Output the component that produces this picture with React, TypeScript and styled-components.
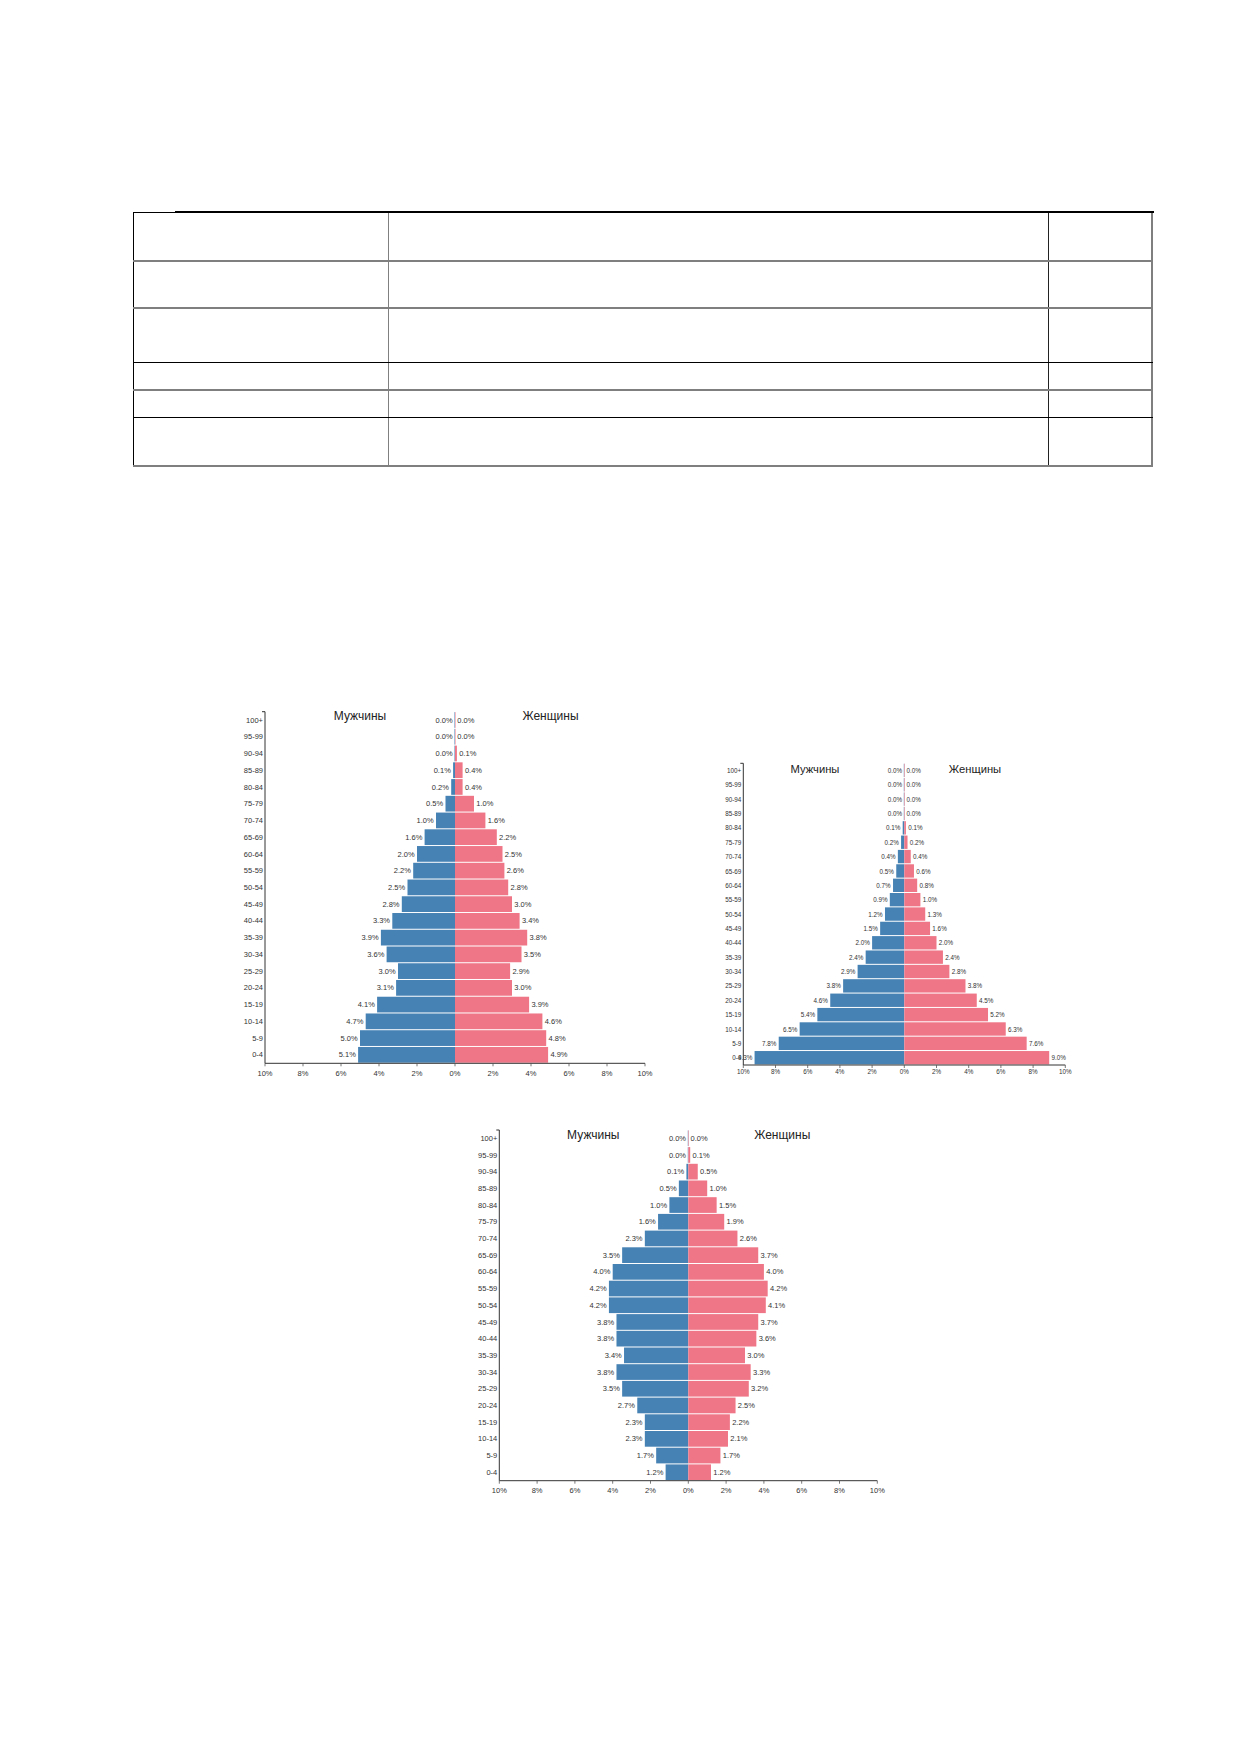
import React from "react";
import styled, { createGlobalStyle } from "styled-components";

const Global = createGlobalStyle`
  html, body { margin: 0; padding: 0; background: #ffffff; }
  body { width: 1240px; min-height: 1754px; font-family: "Liberation Sans", Arial, sans-serif; }
`;

const Page = styled.div`
  width: 1240px;
  min-height: 1754px;
  padding-top: 212px;
  box-sizing: border-box;
`;

const TableWrap = styled.div`
  position: relative;
  margin-left: 133px;
  width: 1020px;
  border-top: 1px solid #000;
  box-sizing: border-box;
`;

const TopRule = styled.div`
  position: absolute;
  top: -2px;
  left: 42px;
  right: -1px;
  height: 2px;
  background: #000;
`;

type Line = "gray" | "black";

const Row = styled.div<{ $h: number; $line: Line }>`
  display: grid;
  grid-template-columns: 256px 660px 104px;
  height: ${(p) => p.$h}px;
  box-sizing: border-box;
  border-bottom: ${(p) => (p.$line === "gray" ? "2px solid #7f7f7f" : "1px solid #000")};
`;

const Cell = styled.div<{ $pos: "first" | "mid" | "last" }>`
  box-sizing: border-box;
  border-left: ${(p) => (p.$pos === "first" ? "1px solid #000" : "none")};
  border-right: ${(p) =>
    p.$pos === "first" ? "1px solid #808080" : p.$pos === "mid" ? "1px solid #222" : "2px solid #7f7f7f"};
`;

const ChartRow = styled.div<{ $mt: number }>`
  display: flex;
  align-items: flex-start;
  margin-top: ${(p) => p.$mt}px;
`;

const ChartSlot = styled.div<{ $ml: number; $mt?: number }>`
  margin-left: ${(p) => p.$ml}px;
  margin-top: ${(p) => p.$mt ?? 0}px;
  svg { display: block; overflow: visible; }
`;

const SmallText = styled.text<{ $fs: number }>`
  font-family: "Liberation Sans", Arial, sans-serif;
  font-size: ${(p) => p.$fs}px;
  fill: #333;
  dominant-baseline: central;
`;

const TitleText = styled.text<{ $fs: number }>`
  font-family: "Liberation Sans", Arial, sans-serif;
  font-size: ${(p) => p.$fs}px;
  fill: #222;
  dominant-baseline: central;
  text-anchor: middle;
`;

const MALE = "#4682b4";
const FEMALE = "#ef7687";

const AGES = [
  "100+", "95-99", "90-94", "85-89", "80-84", "75-79", "70-74", "65-69", "60-64", "55-59",
  "50-54", "45-49", "40-44", "35-39", "30-34", "25-29", "20-24", "15-19", "10-14", "5-9", "0-4",
];

type Cfg = {
  w: number; h: number; axisX: number; top: number; bottom: number; pxPer: number;
  fs: number; titleFs: number; titleY: number; maleX: number; femaleX: number; tickY: number;
};

function Pyramid({ cfg, male, female }: { cfg: Cfg; male: number[]; female: number[] }) {
  const n = AGES.length;
  const rowH = (cfg.bottom - cfg.top) / n;
  const center = cfg.axisX + 10 * cfg.pxPer;
  const right = cfg.axisX + 20 * cfg.pxPer;
  const ticks = [10, 8, 6, 4, 2, 0, 2, 4, 6, 8, 10];
  return (
    <svg width={cfg.w} height={cfg.h} viewBox={`0 0 ${cfg.w} ${cfg.h}`}>
      {AGES.map((age, i) => {
        const y0 = cfg.top + i * rowH;
        const cy = y0 + rowH / 2;
        const m = male[i];
        const f = female[i];
        const mw = m * cfg.pxPer;
        const fw = f * cfg.pxPer;
        return (
          <g key={age}>
            <rect x={center - Math.max(mw, 0.5)} y={y0 + 0.4} width={Math.max(mw, 0.5)} height={rowH - 1} fill={MALE} />
            <rect x={center} y={y0 + 0.4} width={Math.max(fw, 0.5)} height={rowH - 1} fill={FEMALE} />
            <SmallText $fs={cfg.fs} x={cfg.axisX - 2} y={cy} textAnchor="end">{age}</SmallText>
            <SmallText $fs={cfg.fs} x={center - mw - 2.3} y={cy} textAnchor="end">{m.toFixed(1)}%</SmallText>
            <SmallText $fs={cfg.fs} x={center + fw + 2.3} y={cy} textAnchor="start">{f.toFixed(1)}%</SmallText>
          </g>
        );
      })}
      <line x1={cfg.axisX - 3} y1={cfg.top} x2={cfg.axisX} y2={cfg.top} stroke="#333" strokeWidth={1} />
      <line x1={cfg.axisX} y1={cfg.top} x2={cfg.axisX} y2={cfg.bottom} stroke="#333" strokeWidth={1} />
      <line x1={cfg.axisX} y1={cfg.bottom} x2={right} y2={cfg.bottom} stroke="#333" strokeWidth={1} />
      {ticks.map((t, k) => {
        const x = cfg.axisX + k * 2 * cfg.pxPer;
        return (
          <g key={k}>
            <line x1={x} y1={cfg.bottom} x2={x} y2={cfg.bottom + 3} stroke="#555" strokeWidth={0.8} />
            <SmallText $fs={cfg.fs} x={x} y={cfg.tickY} textAnchor="middle">{t}%</SmallText>
          </g>
        );
      })}
      <TitleText $fs={cfg.titleFs} x={cfg.maleX} y={cfg.titleY}>Мужчины</TitleText>
      <TitleText $fs={cfg.titleFs} x={cfg.femaleX} y={cfg.titleY}>Женщины</TitleText>
    </svg>
  );
}

const chart1: Cfg = { w: 420, h: 382, axisX: 30, top: 11.7, bottom: 363.3, pxPer: 19, fs: 7.5, titleFs: 12, titleY: 16, maleX: 125, femaleX: 315.5, tickY: 373 };
const chart2: Cfg = { w: 360, h: 330, axisX: 28.3, top: 8.3, bottom: 310, pxPer: 16.1, fs: 6.3, titleFs: 11.2, titleY: 14, maleX: 100, femaleX: 260, tickY: 316.7 };
const chart3: Cfg = { w: 418, h: 385, axisX: 29.3, top: 10, bottom: 360.7, pxPer: 18.9, fs: 7.5, titleFs: 12, titleY: 15, maleX: 123.3, femaleX: 312.3, tickY: 370 };

const m1 = [0.0, 0.0, 0.0, 0.1, 0.2, 0.5, 1.0, 1.6, 2.0, 2.2, 2.5, 2.8, 3.3, 3.9, 3.6, 3.0, 3.1, 4.1, 4.7, 5.0, 5.1];
const f1 = [0.0, 0.0, 0.1, 0.4, 0.4, 1.0, 1.6, 2.2, 2.5, 2.6, 2.8, 3.0, 3.4, 3.8, 3.5, 2.9, 3.0, 3.9, 4.6, 4.8, 4.9];
const m2 = [0.0, 0.0, 0.0, 0.0, 0.1, 0.2, 0.4, 0.5, 0.7, 0.9, 1.2, 1.5, 2.0, 2.4, 2.9, 3.8, 4.6, 5.4, 6.5, 7.8, 9.3];
const f2 = [0.0, 0.0, 0.0, 0.0, 0.1, 0.2, 0.4, 0.6, 0.8, 1.0, 1.3, 1.6, 2.0, 2.4, 2.8, 3.8, 4.5, 5.2, 6.3, 7.6, 9.0];
const m3 = [0.0, 0.0, 0.1, 0.5, 1.0, 1.6, 2.3, 3.5, 4.0, 4.2, 4.2, 3.8, 3.8, 3.4, 3.8, 3.5, 2.7, 2.3, 2.3, 1.7, 1.2];
const f3 = [0.0, 0.1, 0.5, 1.0, 1.5, 1.9, 2.6, 3.7, 4.0, 4.2, 4.1, 3.7, 3.6, 3.0, 3.3, 3.2, 2.5, 2.2, 2.1, 1.7, 1.2];

const rows: { h: number; line: Line }[] = [
  { h: 49, line: "gray" },
  { h: 47, line: "gray" },
  { h: 54, line: "black" },
  { h: 28, line: "gray" },
  { h: 27, line: "black" },
  { h: 49, line: "gray" },
];

export default function App() {
  return (
    <>
      <Global />
      <Page>
        <TableWrap>
          <TopRule />
          {rows.map((r, i) => (
            <Row key={i} $h={r.h} $line={r.line}>
              <Cell $pos="first" />
              <Cell $pos="mid" />
              <Cell $pos="last" />
            </Row>
          ))}
        </TableWrap>
        <ChartRow $mt={233}>
          <ChartSlot $ml={235}>
            <Pyramid cfg={chart1} male={m1} female={f1} />
          </ChartSlot>
          <ChartSlot $ml={60} $mt={55}>
            <Pyramid cfg={chart2} male={m2} female={f2} />
          </ChartSlot>
        </ChartRow>
        <ChartRow $mt={35}>
          <ChartSlot $ml={470}>
            <Pyramid cfg={chart3} male={m3} female={f3} />
          </ChartSlot>
        </ChartRow>
      </Page>
    </>
  );
}
